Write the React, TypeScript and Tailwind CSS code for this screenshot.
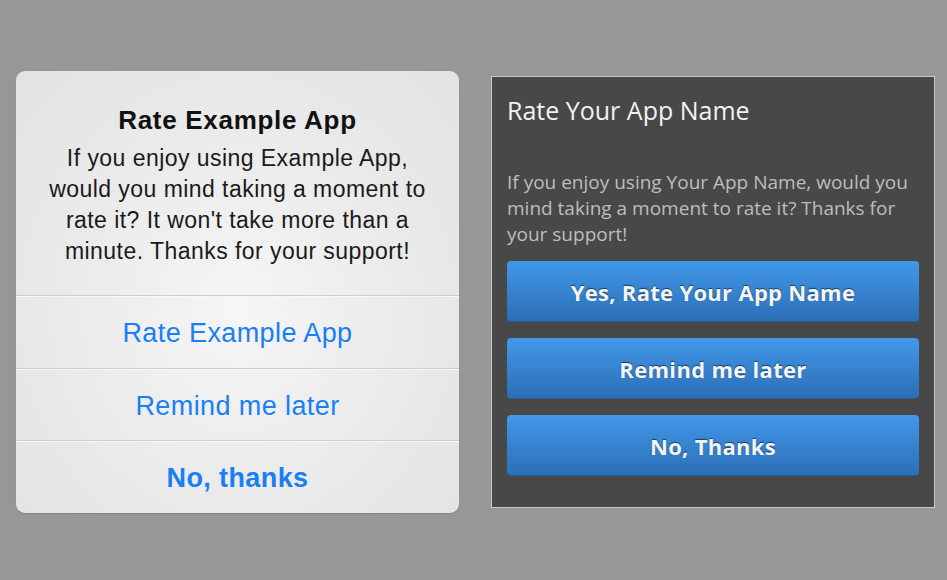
import React from 'react';

const iosFont = { fontFamily: '"Liberation Sans", Arial, sans-serif' };
const droidFont = { fontFamily: '"Open Sans", "Noto Sans", sans-serif' };

function IosAlert() {
  const actions = [
    { label: 'Rate Example App', bold: false },
    { label: 'Remind me later', bold: false },
    { label: 'No, thanks', bold: true },
  ];

  return (
    <div
      style={iosFont}
      className="ml-[16px] mt-[71px] flex h-[442px] w-[443px] flex-col overflow-hidden rounded-[9px] bg-[radial-gradient(ellipse_at_50%_55%,#f6f6f6_0%,#ececec_45%,#e2e2e2_100%)] shadow-[0_1px_1px_rgba(0,0,0,0.15)]"
    >
      <div className="flex h-[224px] flex-col items-center pt-[34px] text-center text-[#111]">
        <h2 className="text-[26px] font-bold leading-[30px] tracking-[0.7px]">Rate Example App</h2>
        <p className="mt-[8px] text-[23px] leading-[31px] tracking-[0.45px] text-[#1a1a1a]">
          If you enjoy using Example App,
          <br />
          would you mind taking a moment to
          <br />
          rate it? It won't take more than a
          <br />
          minute. Thanks for your support!
        </p>
      </div>
      {actions.map((a) => (
        <button
          key={a.label}
          className={`flex flex-1 items-center justify-center border-t border-[#cdcdcd] pt-[3px] shadow-[inset_0_1px_0_#f8f8f8] text-[27px] tracking-[0.4px] text-[#1a7ef5] ${
            a.bold ? 'font-bold' : 'font-normal'
          }`}
        >
          {a.label}
        </button>
      ))}
    </div>
  );
}

function AndroidAlert() {
  const actions = ['Yes, Rate Your App Name', 'Remind me later', 'No, Thanks'];

  return (
    <div
      style={droidFont}
      className="ml-[32px] mt-[76px] flex h-[432px] w-[444px] flex-col border border-[#c8c8c8] bg-[#484848] px-[15px]"
    >
      <h2 className="pt-[18px] text-[25px] leading-[30px] text-[#f2f2f2]">Rate Your App Name</h2>
      <p className="mt-[44px] whitespace-nowrap text-[19px] leading-[26px] text-[#bdbdbd]">
        If you enjoy using Your App Name, would you
        <br />
        mind taking a moment to rate it? Thanks for
        <br />
        your support!
      </p>
      <div className="mt-[14px] flex flex-col gap-[16px]">
        {actions.map((label) => (
          <button
            key={label}
            className="flex h-[61px] items-center justify-center rounded-[4px] border-b border-[#245f9c] bg-gradient-to-b from-[#4298ea] to-[#2c6fb6] pt-[2px] text-[22px] font-bold tracking-[0.3px] text-[#f4f4f4] [text-shadow:0_-1px_1px_rgba(0,0,0,0.55)]"
          >
            {label}
          </button>
        ))}
      </div>
    </div>
  );
}

export default function App() {
  return (
    <div className="flex h-[580px] w-[947px] items-start bg-[#979797]">
      <IosAlert />
      <AndroidAlert />
    </div>
  );
}
